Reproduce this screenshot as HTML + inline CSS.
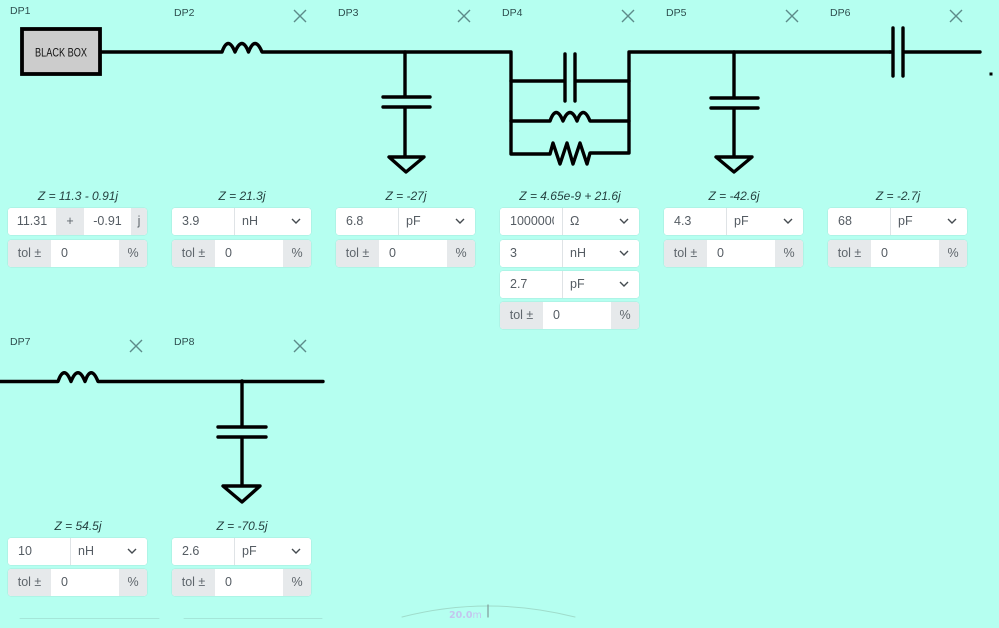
<!DOCTYPE html>
<html><head><meta charset="utf-8"><style>
html,body{margin:0;padding:0}
body{width:999px;height:628px;overflow:hidden;background:#b5fff0;position:relative;font-family:"Liberation Sans",sans-serif;color:#555c63}
.l{position:absolute;font-size:10.5px;line-height:12px;color:#2f4f4f}
.z{position:absolute;width:140px;text-align:center;font-size:12px;line-height:14px;font-style:italic;color:#25403f}
.r{position:absolute;height:27px;display:flex;border-radius:3px;overflow:hidden;box-shadow:0 0 0 .5px #a8eadd;font-size:12.5px;line-height:27px;background:#fff}
.r span{display:block;height:27px;box-sizing:border-box;overflow:hidden;white-space:nowrap;flex:none}
.w{background:#fff;padding-left:10px}
.n{background:#fff;text-align:center}
.a{background:#e6e9eb;text-align:center;color:#5f666c}
.s{background:#fff;border-left:1px solid #dfe3e6;padding-left:7px;position:relative;flex:1 !important}
svg.c{position:absolute;right:10px;top:10px}
svg.m{position:absolute;left:0;top:0}
</style></head><body>
<svg class="m" width="999" height="628" viewBox="0 0 999 628" fill="none" stroke="#000" stroke-width="3.4" stroke-linejoin="round" stroke-linecap="round">
<rect x="22" y="29" width="78" height="45" fill="#cccccc" stroke-linejoin="miter" stroke-width="3.8"/>
<path d="M102 52H222Q228 35 235 52Q242 35 248.5 52Q255 35 262 52H511M511 52V154H550L553 143L560 164L567 143L573 164L580 143L587 164L590 153H629V52H890"/>
<path d="M511 81H565M575 81H629M565 54V101M575 54V101M511 121H550Q556 104 563 121Q570 104 577 121Q583 104 590 121H629"/>
<path d="M405 52V97M383 97H430M383 107H430M405 107V156M389 157H424L406 172Z"/>
<path d="M734 52V98M711 98H758M711 108H758M734 108V156M716 157H752L734 172Z"/>
<path d="M890 52H893M893 28V76M903 28V76M903 52H980"/>
<path d="M0 381.5H58Q64 364 71 381.5Q78 364 85 381.5Q91 364 98 381.5H323"/>
<path d="M242 381V427M218 427H266M218 437H266M242 437V485M223 486H260L242 502Z"/>
<rect x="989.5" y="72.5" width="3" height="3" fill="#000" stroke="none"/>
<g stroke="#5d8b89" stroke-width="1.4" stroke-linecap="butt">
<path d="M294 10L306 22M306 10L294 22M458 10L470 22M470 10L458 22M622 10L634 22M634 10L622 22M786 10L798 22M798 10L786 22M950 10L962 22M962 10L950 22M130 340L142 352M142 340L130 352M294 340L306 352M306 340L294 352"/>
</g>
<path d="M402 617Q488 595 575 617" stroke="#9fdccb" stroke-width="1"/>
<path d="M488 605V617" stroke="#7f9a98" stroke-width="1.2"/>
<path d="M20 618.5H159M184 618.5H322" stroke="#a5e6d9" stroke-width="1"/>
<text x="35" y="56.5" font-family="Liberation Sans" font-size="11.5" fill="#111" stroke="none" textLength="52" lengthAdjust="spacingAndGlyphs">BLACK BOX</text>
<text x="449" y="618" font-family="DejaVu Sans" font-size="9.5" font-weight="bold" fill="#c3c6ee" stroke="none">20.0<tspan font-weight="normal">m</tspan></text>
</svg>

<div class="l" style="left:10px;top:5px">DP1</div>
<div class="l" style="left:174px;top:7px">DP2</div>
<div class="l" style="left:338px;top:7px">DP3</div>
<div class="l" style="left:502px;top:7px">DP4</div>
<div class="l" style="left:666px;top:7px">DP5</div>
<div class="l" style="left:830px;top:7px">DP6</div>
<div class="l" style="left:10px;top:336px">DP7</div>
<div class="l" style="left:174px;top:336px">DP8</div>

<div class="z" style="left:8px;top:189px">Z = 11.3 - 0.91j</div>
<div class="z" style="left:172px;top:189px">Z = 21.3j</div>
<div class="z" style="left:336px;top:189px">Z = -27j</div>
<div class="z" style="left:500px;top:189px">Z = 4.65e-9 + 21.6j</div>
<div class="z" style="left:664px;top:189px">Z = -42.6j</div>
<div class="z" style="left:828px;top:189px">Z = -2.7j</div>
<div class="z" style="left:8px;top:519px">Z = 54.5j</div>
<div class="z" style="left:172px;top:519px">Z = -70.5j</div>

<div class="r" style="left:8px;top:208px;width:139px"><span class="n" style="width:48px">11.31</span><span class="a" style="width:28px">+</span><span class="n" style="width:47px">-0.91</span><span class="a" style="width:16px">j</span></div>
<div class="r" style="left:8px;top:240px;width:139px"><span class="a" style="width:43px">tol ±</span><span class="w" style="width:68px">0</span><span class="a" style="width:28px">%</span></div>

<div class="r" style="left:172px;top:208px;width:139px"><span class="w" style="width:62px">3.9</span><span class="s">nH<svg class="c" width="10" height="6" fill="none" stroke="#454b50" stroke-width="1.4"><path d="M1 1L5 5L9 1"/></svg></span></div>
<div class="r" style="left:172px;top:240px;width:139px"><span class="a" style="width:43px">tol ±</span><span class="w" style="width:68px">0</span><span class="a" style="width:28px">%</span></div>

<div class="r" style="left:336px;top:208px;width:139px"><span class="w" style="width:62px">6.8</span><span class="s">pF<svg class="c" width="10" height="6" fill="none" stroke="#454b50" stroke-width="1.4"><path d="M1 1L5 5L9 1"/></svg></span></div>
<div class="r" style="left:336px;top:240px;width:139px"><span class="a" style="width:43px">tol ±</span><span class="w" style="width:68px">0</span><span class="a" style="width:28px">%</span></div>

<div class="r" style="left:500px;top:208px;width:139px"><span class="w" style="width:62px;border-right:8px solid #fff">1000000</span><span class="s">Ω<svg class="c" width="10" height="6" fill="none" stroke="#454b50" stroke-width="1.4"><path d="M1 1L5 5L9 1"/></svg></span></div>
<div class="r" style="left:500px;top:240px;width:139px"><span class="w" style="width:62px">3</span><span class="s">nH<svg class="c" width="10" height="6" fill="none" stroke="#454b50" stroke-width="1.4"><path d="M1 1L5 5L9 1"/></svg></span></div>
<div class="r" style="left:500px;top:271px;width:139px"><span class="w" style="width:62px">2.7</span><span class="s">pF<svg class="c" width="10" height="6" fill="none" stroke="#454b50" stroke-width="1.4"><path d="M1 1L5 5L9 1"/></svg></span></div>
<div class="r" style="left:500px;top:302px;width:139px"><span class="a" style="width:43px">tol ±</span><span class="w" style="width:68px">0</span><span class="a" style="width:28px">%</span></div>

<div class="r" style="left:664px;top:208px;width:139px"><span class="w" style="width:62px">4.3</span><span class="s">pF<svg class="c" width="10" height="6" fill="none" stroke="#454b50" stroke-width="1.4"><path d="M1 1L5 5L9 1"/></svg></span></div>
<div class="r" style="left:664px;top:240px;width:139px"><span class="a" style="width:43px">tol ±</span><span class="w" style="width:68px">0</span><span class="a" style="width:28px">%</span></div>

<div class="r" style="left:828px;top:208px;width:139px"><span class="w" style="width:62px">68</span><span class="s">pF<svg class="c" width="10" height="6" fill="none" stroke="#454b50" stroke-width="1.4"><path d="M1 1L5 5L9 1"/></svg></span></div>
<div class="r" style="left:828px;top:240px;width:139px"><span class="a" style="width:43px">tol ±</span><span class="w" style="width:68px">0</span><span class="a" style="width:28px">%</span></div>

<div class="r" style="left:8px;top:538px;width:139px"><span class="w" style="width:62px">10</span><span class="s">nH<svg class="c" width="10" height="6" fill="none" stroke="#454b50" stroke-width="1.4"><path d="M1 1L5 5L9 1"/></svg></span></div>
<div class="r" style="left:8px;top:569px;width:139px"><span class="a" style="width:43px">tol ±</span><span class="w" style="width:68px">0</span><span class="a" style="width:28px">%</span></div>

<div class="r" style="left:172px;top:538px;width:139px"><span class="w" style="width:62px">2.6</span><span class="s">pF<svg class="c" width="10" height="6" fill="none" stroke="#454b50" stroke-width="1.4"><path d="M1 1L5 5L9 1"/></svg></span></div>
<div class="r" style="left:172px;top:569px;width:139px"><span class="a" style="width:43px">tol ±</span><span class="w" style="width:68px">0</span><span class="a" style="width:28px">%</span></div>
</body></html>
